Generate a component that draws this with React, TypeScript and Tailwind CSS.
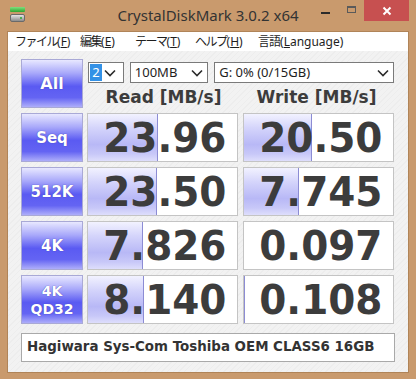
import React from "react";

const rows = [
  { label: ["Seq"], read: "23.96", write: "20.50", readBar: 70, writeBar: 68 },
  { label: ["512K"], read: "23.50", write: "7.745", readBar: 69, writeBar: 55 },
  { label: ["4K"], read: "7.826", write: "0.097", readBar: 55, writeBar: 0 },
  { label: ["4K", "QD32"], read: "8.140", write: "0.108", readBar: 56, writeBar: 1 },
];

const menu = [
  { text: "ファイル", key: "F", w: "w-[65px]" },
  { text: "編集", key: "E", w: "w-[55px]" },
  { text: "テーマ", key: "T", w: "w-[60px]" },
  { text: "ヘルプ", key: "H", w: "w-[63px]" },
];

function Chevron() {
  return (
    <svg width="12" height="8" viewBox="0 0 12 8" className="shrink-0">
      <polyline points="1,1.5 6,6.5 11,1.5" fill="none" stroke="#2b2b2b" strokeWidth="1.6" />
    </svg>
  );
}

function BlueButton({ children, size = "text-[15px]" }: { children: React.ReactNode; size?: string }) {
  return (
    <div
      className={`h-[49px] border border-[#a9a9d6] bg-[linear-gradient(to_bottom,#e8e8ff_0%,#a8a8fa_28%,#5a5af2_56%,#6464f3_80%,#aeaefa_100%)] flex flex-col items-center justify-center text-white font-bold leading-[18px] ${size} [font-family:'DejaVu_Sans',sans-serif] [text-shadow:0_0_1px_#3030a0]`}
    >
      {children}
    </div>
  );
}

function Cell({ value, bar }: { value: string; bar: number }) {
  return (
    <div className="relative h-[49px] border border-[#c4c4c4] bg-white overflow-hidden">
      {bar > 0 && (
        <div
          className="absolute left-0 top-0 bottom-0 border-r border-[#8c8cd4] bg-[linear-gradient(to_bottom,#f2f2ff_0%,#d4d4fb_30%,#b8b8f6_65%,#c8c8f8_85%,#dedefc_100%)]"
          style={{ width: bar }}
        />
      )}
      <div className="relative h-full flex items-center justify-center pt-[2px] pl-[4px] text-[41px] font-bold leading-none text-[#3c3c3c] [font-family:'DejaVu_Sans',sans-serif]">
        <span className="scale-x-95">{value}</span>
      </div>
    </div>
  );
}

export default function App() {
  return (
    <div className="w-[416px] h-[379px] bg-[#c99a6d] flex flex-col overflow-hidden">
      {/* title bar */}
      <div className="h-[31px] grid grid-cols-[1fr_auto_1fr] items-start">
        <div className="pl-[10px] pt-[7px] flex flex-col gap-[2px]">
          <div className="w-[15px] h-[5px] rounded-[1px] bg-[linear-gradient(to_bottom,#7ee07e,#2fa52f)]" />
          <div className="w-[15px] h-[8px] rounded-[2px] bg-[linear-gradient(to_bottom,#e4e4e4,#8c8c8c)] border border-[#6a6a6a] flex items-center justify-end pr-[2px]">
            <div className="w-[2px] h-[2px] bg-[#4caf50]" />
          </div>
        </div>
        <div className="pt-[5px] text-[15px] leading-[20px] text-[#333] [font-family:'Noto_Sans',sans-serif]">
          CrystalDiskMark 3.0.2 x64
        </div>
        <div className="flex justify-end items-start">
          <div className="w-[26px] h-[21px] flex items-center justify-center">
            <div className="w-[9px] h-[2px] bg-[#2a2a2a] mt-[4px]" />
          </div>
          <div className="w-[26px] h-[21px] flex items-center justify-center">
            <div className="w-[9px] h-[7px] border border-[#5a5a5a] border-t-2 mb-[3px]" />
          </div>
          <div className="w-[45px] h-[21px] mr-[7px] bg-[#c75050] flex items-center justify-center">
            <svg width="10" height="10" viewBox="0 0 10 10">
              <path d="M1.5 1.5 L8.5 8.5 M8.5 1.5 L1.5 8.5" stroke="#fff" strokeWidth="2" />
            </svg>
          </div>
        </div>
      </div>

      {/* client */}
      <div className="mx-[7px] h-[342px] border border-[#b08458] flex flex-col bg-[#f1f1f1]">
        <div className="h-[19px] bg-white flex items-center pl-[7px] text-[12px] leading-[19px] text-[#1e1e1e] [font-family:'Noto_Sans','Noto_Sans_CJK_JP',sans-serif]">
          {menu.map((m) => (
            <div key={m.key + m.text} className={`${m.w} whitespace-nowrap`}>
              <span className="tracking-[-1.5px]">{m.text}</span>(<span className="underline">{m.key}</span>)
            </div>
          ))}
          <div className="whitespace-nowrap">
            <span className="tracking-[-1px]">言語</span>(<span className="underline">L</span>anguage)
          </div>
        </div>

        <div className="flex-1 bg-[repeating-linear-gradient(135deg,#f2f2f2_0px,#f2f2f2_3px,#ededed_3px,#ededed_4px)] pl-[13px] pt-[8px]">
          <div className="grid grid-cols-[62px_151px_152px] gap-x-[4px] gap-y-[5px] w-[373px] [&>*:nth-child(3n+2)]:ml-[1px]">
            <BlueButton size="text-[16px]">All</BlueButton>
            <div className="col-span-2 h-[49px] flex flex-col">
              <div className="flex gap-[6px] mt-[3px] h-[21px] text-[13px] text-[#1e1e1e] [font-family:'Noto_Sans',sans-serif]">
                <div className="w-[36px] border border-[#7a7a7a] bg-white flex items-center pl-[1px] pr-[3px] gap-[2px]">
                  <div className="w-[12px] h-[17px] bg-[#3391e6] text-white leading-[17px] text-center">2</div>
                  <Chevron />
                </div>
                <div className="w-[79px] border border-[#7a7a7a] bg-white flex items-center justify-between pl-[4px] pr-[4px]">
                  <span className="leading-[19px]">100MB</span>
                  <Chevron />
                </div>
                <div className="w-[181px] border border-[#7a7a7a] bg-white flex items-center justify-between pl-[4px] pr-[4px]">
                  <span className="leading-[19px]">G: 0% (0/15GB)</span>
                  <Chevron />
                </div>
              </div>
              <div className="flex mt-[3px] text-[17px] leading-[22px] font-bold text-[#3c3c3c] [font-family:'DejaVu_Sans',sans-serif]">
                <div className="w-[152px] text-center">Read [MB/s]</div>
                <div className="w-[156px] text-center">Write [MB/s]</div>
              </div>
            </div>
            {rows.map((r) => (
              <React.Fragment key={r.label.join("")}>
                <BlueButton size={r.label.length > 1 ? "text-[14px]" : "text-[15px]"}>
                  {r.label.map((l) => (
                    <span key={l}>{l}</span>
                  ))}
                </BlueButton>
                <Cell value={r.read} bar={r.readBar} />
                <Cell value={r.write} bar={r.writeBar} />
              </React.Fragment>
            ))}
          </div>

          <div className="mt-[9px] w-[374px] h-[29px] border border-[#a9a9a9] bg-white flex items-center pl-[5px] text-[13.4px] font-bold text-[#333] [font-family:'DejaVu_Sans',sans-serif]">
            Hagiwara Sys-Com Toshiba OEM CLASS6 16GB
          </div>
        </div>
      </div>
    </div>
  );
}
